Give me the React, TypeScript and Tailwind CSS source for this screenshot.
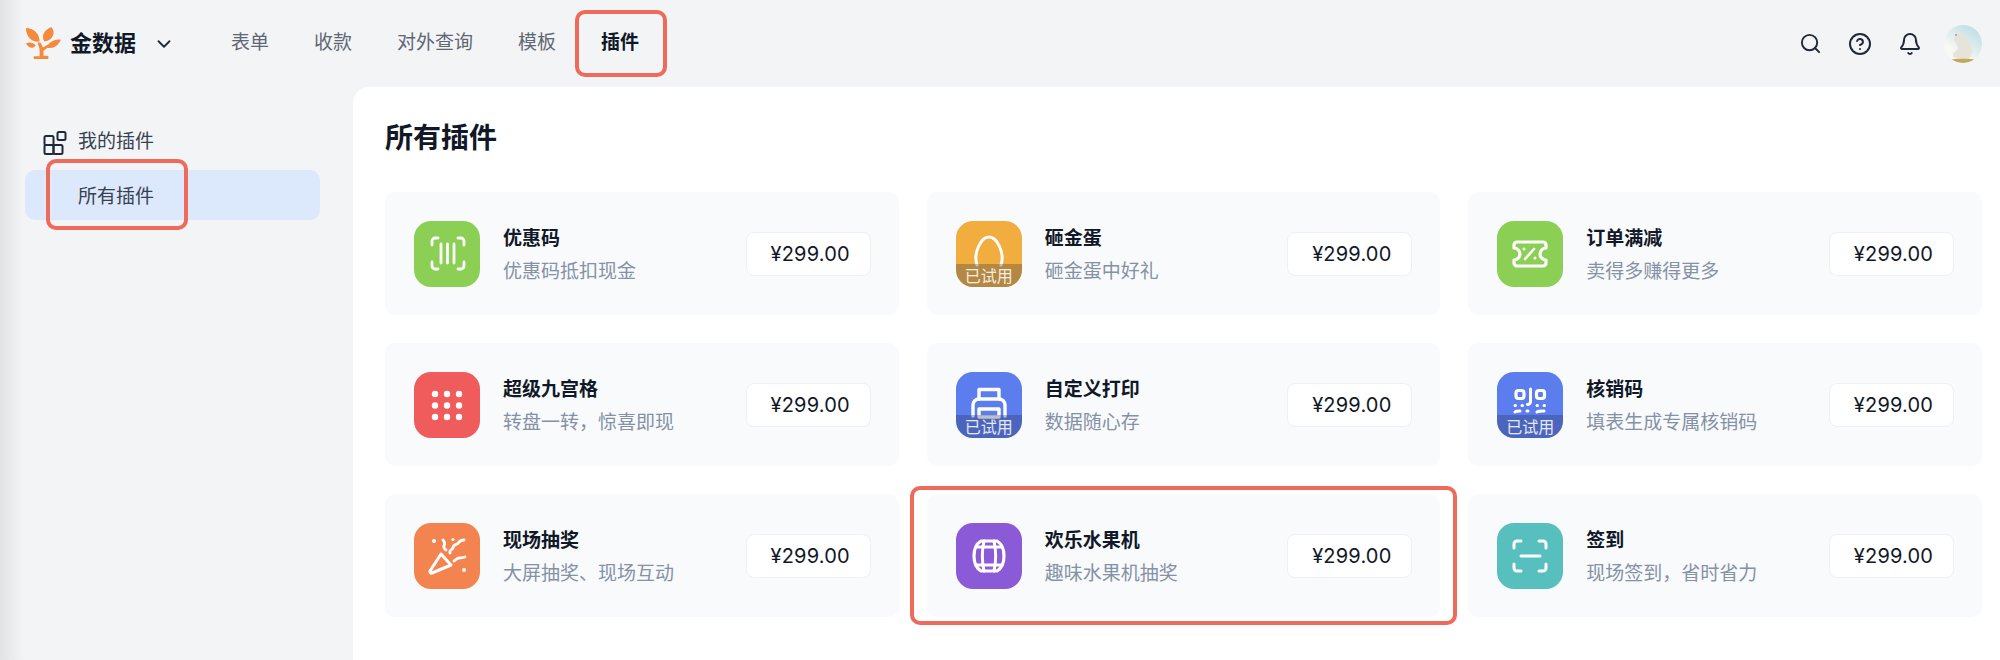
import type { ReactNode } from 'react'
import { Bell, ChevronDown, CircleHelp, Search } from 'lucide-react'

const FONT = 'font-["Inter","Noto_Sans_CJK_SC",sans-serif]'

function IconBox({ color, tried, children }: { color: string; tried?: boolean; children: ReactNode }) {
  return (
    <div className={`relative w-[66px] h-[66px] shrink-0 rounded-[17px] overflow-hidden ${color}`}>
      <svg viewBox="0 0 66 66" className="w-full h-full" fill="none" stroke="#fff" strokeWidth="2.8" strokeLinecap="round" strokeLinejoin="round">
        {children}
      </svg>
      {tried && (
        <div className="absolute inset-x-0 bottom-0 h-[23px] bg-[#28304a]/30 text-[16px] leading-[24px] text-center text-white/85">已试用</div>
      )}
    </div>
  )
}

const ICONS: Record<string, ReactNode> = {
  scan: (
    <>
      <path d="M18 24v-4a3 3 0 0 1 3-3h3M50 24v-4a3 3 0 0 0-3-3h-3M18 41v4a3 3 0 0 0 3 3h3M50 41v4a3 3 0 0 1-3 3h-3" />
      <path d="M27 23v19M33.500 23v19M40 23v19" />
    </>
  ),
  egg: <path d="M21 44C17 32 25 16 33 16C41 16 49 32 45 44" strokeWidth="3" />,
  ticket: (
    <>
      <path d="M20 21h26a3 3 0 0 1 3 3v3a6 6 0 0 0 0 12v3a3 3 0 0 1-3 3H20a3 3 0 0 1-3-3v-3a6 6 0 0 0 0-12v-3a3 3 0 0 1 3-3z" strokeWidth="3.200" />
      <path d="M28 38l9-10" strokeWidth="2.600" />
      <circle cx="27" cy="28" r="1.500" fill="#fff" stroke="none" />
      <circle cx="38" cy="37" r="1.500" fill="#fff" stroke="none" />
    </>
  ),
  grid: (
    <g fill="#fff" stroke="none">
      {[22, 33.500, 45].map((y) =>
        [21, 33, 45].map((x) => <circle key={`${x}-${y}`} cx={x} cy={y} r="3.200" />),
      )}
    </g>
  ),
  printer: (
    <>
      <path d="M23 27V17.500h20V27" strokeWidth="3.400" />
      <path d="M17 44V33a6 6 0 0 1 6-6h20a6 6 0 0 1 6 6v11" strokeWidth="3.400" />
      <path d="M23 37h20v8H23z" strokeWidth="3.400" />
    </>
  ),
  qr: (
    <>
      <rect x="19" y="18.500" width="8" height="8" rx="2.500" strokeWidth="3.200" />
      <rect x="39.500" y="18.500" width="8" height="8" rx="2.500" strokeWidth="3.200" />
      <path d="M33.500 17v12a3 3 0 0 1-3 3.500M18 33.500h.5M25 33.500h.5M40 33.500h.5M47 33.500h.5M18 40c1-1 3-1 5-1M30 39h1M40 40c1-1 4-1 7-1" strokeWidth="3" />
    </>
  ),
  party: (
    <>
      <path d="M27 31l10 11-19 8a1.500 1.500 0 0 1-2-2z" strokeWidth="3" />
      <path d="M36 30c-1-3 2-3 3-5 0-3 2-3 4-4 2-1 2-4 7-4M29 17c2 2 2 4 1 6s1 3 2 4M40 38c2-1 3-3 5-3 2 0 3 0 6-1" strokeWidth="2.800" />
      <g fill="#fff" stroke="none">
        <circle cx="20" cy="18" r="2" />
        <circle cx="39" cy="16.500" r="1.600" />
        <circle cx="50" cy="47" r="2" />
      </g>
    </>
  ),
  barrel: (
    <>
      <path d="M25 18h16c5 3 7 9 7 15s-2 12-7 15H25c-5-3-7-9-7-15s2-12 7-15z" strokeWidth="3.200" />
      <path d="M28 18c-2 9-2 21 0 30M38 18c2 9 2 21 0 30" strokeWidth="3" />
      <path d="M20 24h26M20 42h26" strokeWidth="3" />
    </>
  ),
  frame: (
    <>
      <path d="M17 25v-4a3 3 0 0 1 3-3h4M49 25v-4a3 3 0 0 0-3-3h-4M17 41v4a3 3 0 0 0 3 3h4M49 41v4a3 3 0 0 1-3 3h-4" strokeWidth="3" />
      <path d="M24 33h19" strokeWidth="3" />
    </>
  ),
}

const PLUGINS = [
  { title: '优惠码', desc: '优惠码抵扣现金', icon: 'scan', color: 'bg-[#8bd055]' },
  { title: '砸金蛋', desc: '砸金蛋中好礼', icon: 'egg', color: 'bg-[#f1ae3f]', tried: true },
  { title: '订单满减', desc: '卖得多赚得更多', icon: 'ticket', color: 'bg-[#8bd055]' },
  { title: '超级九宫格', desc: '转盘一转，惊喜即现', icon: 'grid', color: 'bg-[#f05b5b]' },
  { title: '自定义打印', desc: '数据随心存', icon: 'printer', color: 'bg-[#5b7dee]', tried: true },
  { title: '核销码', desc: '填表生成专属核销码', icon: 'qr', color: 'bg-[#5b7dee]', tried: true },
  { title: '现场抽奖', desc: '大屏抽奖、现场互动', icon: 'party', color: 'bg-[#f3834f]' },
  { title: '欢乐水果机', desc: '趣味水果机抽奖', icon: 'barrel', color: 'bg-[#8b5ad6]', marked: true },
  { title: '签到', desc: '现场签到，省时省力', icon: 'frame', color: 'bg-[#58bfbf]' },
]

const NAV = ['表单', '收款', '对外查询', '模板']

function RedBox({ className }: { className: string }) {
  return <div className={`absolute border-[4px] border-[#ee6a5b] rounded-[10px] pointer-events-none ${className}`} />
}

function Logo() {
  return (
    <svg viewBox="5 7 37 35" className="w-[36px] h-[34px]" fill="#f38a3c">
      <path d="M6 8C13 8 20 13 20 22C12 23 6 17 6 8z" />
      <path d="M32 7C37 12 34 21 25 22C21 16 25 10 32 7z" />
      <path d="M6 24C9 22 14 23 16 26C13 30 9 29 6 24z" />
      <path d="M42 20C39 26 34 30 27 28C30 22 36 19 42 20z" />
      <path d="M18 23h3l2.500 5 5-3 1.500 2-6 4.500v5h5v3.500H14V37h6v-7z" />
    </svg>
  )
}

function Avatar() {
  return (
    <div className="w-[38px] h-[38px] rounded-full overflow-hidden bg-[linear-gradient(35deg,#f8f8f4_30%,#c2dfe6_85%)]">
      <svg viewBox="0 0 38 38" className="w-full h-full">
        <path d="M12 9c3-2 7 0 9 3 4 3 7 9 7 15 0 3-1 5-3 6H12c-2 0-3-1-3-3 0-3 4-4 5-7 0-3-3-5-4-8 0-2 1-5 2-6z" fill="#e6e4d8" />
        <ellipse cx="19" cy="36" rx="14" ry="2.500" fill="#c4a75e" />
        <circle cx="12" cy="10" r="1" fill="#8fa3a6" />
      </svg>
    </div>
  )
}

function PluginCard({ title, desc, icon, color, tried, marked }: (typeof PLUGINS)[number] & { tried?: boolean; marked?: boolean }) {
  return (
    <div className="relative h-[123px] rounded-[10px] bg-[#f8fafc] pl-[29px] pr-[28px] flex items-center">
      <IconBox color={color} tried={tried}>{ICONS[icon]}</IconBox>
      <div className="ml-[23px] mt-[3px] flex-1 flex flex-col gap-[9px]">
        <div className="text-[19px] leading-[24px] font-semibold text-[#111827]">{title}</div>
        <div className="text-[19px] leading-[24px] text-[#8591a5]">{desc}</div>
      </div>
      <button type="button" className="w-[125px] h-[44px] rounded-[8px] bg-white border border-[#eef0f4] pl-[4px] text-[20px] tracking-[0.2px] text-[#111827]">¥299.00</button>
      {marked && <RedBox className="-inset-x-[17px] -inset-y-[8px]" />}
    </div>
  )
}

export default function App() {
  return (
    <div className={`${FONT} w-[2000px] h-[660px] overflow-hidden flex flex-col bg-[linear-gradient(90deg,#e2e3e5,#f3f4f6_24px)]`}>
      <header className="h-[87px] shrink-0 flex items-center pl-[25px] pr-[18px]">
        <Logo />
        <span className="ml-[9px] text-[22px] font-bold text-[#111827]">金数据</span>
        <ChevronDown className="ml-[17px] w-[22px] h-[22px] text-[#1f2937]" strokeWidth={2} />
        <nav className="ml-[56px] flex items-center gap-[45px] text-[19px] text-[#5f6775]">
          {NAV.map((item) => (
            <a key={item}>{item}</a>
          ))}
          <a className="relative font-semibold text-[#111827]">
            插件
            <RedBox className="-left-[26px] -right-[28px] -top-[19px] -bottom-[19px]" />
          </a>
        </nav>
        <div className="ml-auto flex items-center text-[#1f2937]">
          <Search className="w-[23px] h-[23px]" strokeWidth={2} />
          <CircleHelp className="ml-[26px] w-[24px] h-[24px]" strokeWidth={2} />
          <Bell className="ml-[26px] w-[24px] h-[24px]" strokeWidth={2} />
          <div className="ml-[22px]"><Avatar /></div>
        </div>
      </header>

      <div className="flex flex-1 min-h-0">
        <aside className="w-[353px] shrink-0 pl-[25px] pr-[33px] pt-[35px] text-[19px]">
          <div className="h-[41px] pl-[18px] flex items-center text-[#374151]">
            <svg viewBox="0 0 24 24" className="w-[24px] h-[24px]" fill="none" stroke="#1f2937" strokeWidth="2" strokeLinejoin="round">
              <rect x="1.500" y="5" width="9" height="9" rx="1.500" />
              <rect x="1.500" y="14" width="9" height="9" rx="1.500" />
              <rect x="10.500" y="14" width="9" height="9" rx="1.500" />
              <rect x="14.500" y="1" width="8" height="8" rx="1.500" />
            </svg>
            <span className="ml-[11px]">我的插件</span>
          </div>
          <div className="relative mt-[7px] h-[50px] pl-[53px] pt-[4px] flex items-center rounded-[10px] bg-[#dce8fb] text-[#374151]">
            所有插件
            <RedBox className="left-[21px] w-[142px] -top-[11px] -bottom-[10px]" />
          </div>
        </aside>

        <main className="flex-1 bg-white rounded-tl-[16px] pl-[32px] pr-[18px] pt-[31px]">
          <h1 className="text-[28px] leading-[40px] font-semibold text-[#111827]">所有插件</h1>
          <div className="mt-[34px] grid grid-cols-3 gap-[28px]">
            {PLUGINS.map((plugin) => (
              <PluginCard key={plugin.title} {...plugin} />
            ))}
          </div>
        </main>
      </div>
    </div>
  )
}
